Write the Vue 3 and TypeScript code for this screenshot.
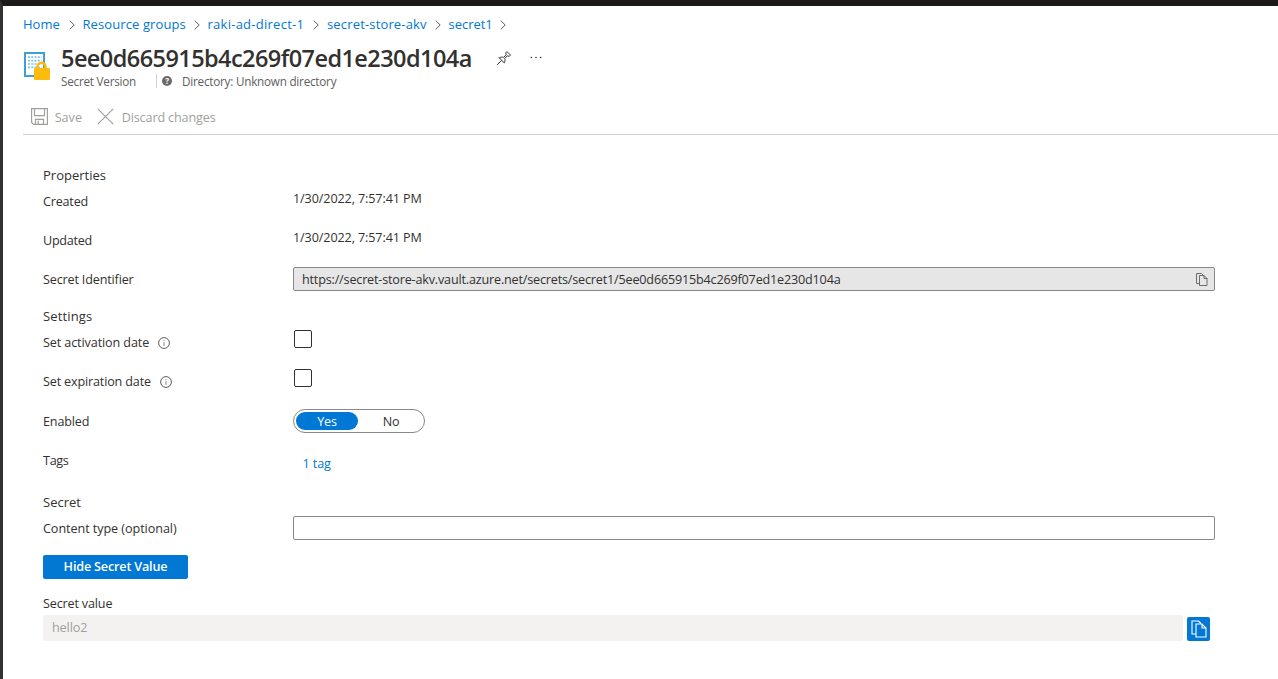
<script setup lang="ts">
import { ref } from 'vue'

const crumbs = ['Home', 'Resource groups', 'raki-ad-direct-1', 'secret-store-akv', 'secret1']
const version = '5ee0d665915b4c269f07ed1e230d104a'
const identifier = `https://secret-store-akv.vault.azure.net/secrets/secret1/${version}`
const activation = ref(false)
const expiration = ref(false)
const enabled = ref(true)
const contentType = ref('')
</script>

<template>
  <div class="page">
    <nav class="crumbs">
      <template v-for="(c, i) in crumbs" :key="c">
        <a :class="'c' + i">{{ c }}</a>
        <svg class="chev" width="6" height="10" viewBox="0 0 6 10"><path d="M.7.6 5.2 5 .7 9.4" /></svg>
      </template>
    </nav>

    <header class="head">
      <svg class="logo" width="28" height="30" viewBox="0 0 28 30">
        <rect x="2" y="1" width="19" height="23" fill="#fff" stroke="#3f9fd0" stroke-width="2" />
        <g stroke="#7cc3e6" stroke-width="1.7" stroke-dasharray="2 1.25">
          <path d="M5 5.2h13.5M5 8.6h13.5M5 12h13.5M5 15.4h13.5" />
        </g>
        <path d="M14.5 18v-3.2a4 4 0 0 1 8 0V18" fill="none" stroke="#fdbb0d" stroke-width="2.6" />
        <rect x="11" y="16" width="16" height="12" rx="1.2" fill="#fdbb0d" />
      </svg>
      <div class="heading">
        <div class="title-row">
          <h1>{{ version }}</h1>
          <svg class="pin" width="16" height="16" viewBox="0 0 16 16">
            <path d="M1.200 14.800 5.600 10.400M2.800 7.400l5.800 5.800M3.300 7.900c1.500-.9 3-1 4.400-.5l2.500-2.700-.4-1.900L11 1.600 14.500 5.100l-1.200 1.200-1.900-.4-2.700 2.500c.5 1.400.4 2.900-.5 4.400" />
          </svg>
          <svg class="dots" width="12" height="3" viewBox="0 0 12 3">
            <circle cx="1.300" cy="1.500" r=".8" /><circle cx="6" cy="1.500" r=".8" /><circle cx="10.700" cy="1.500" r=".8" />
          </svg>
        </div>
        <div class="sub-row">
          <span class="kind">Secret Version</span>
          <i class="bar"></i>
          <span class="help">?</span>
          <span class="dir">Directory: Unknown directory</span>
        </div>
      </div>
    </header>

    <div class="toolbar">
      <svg width="17" height="17" viewBox="0 0 17 17">
        <path d="M.6.600h15.800v15.800H2.600L.6 14.400zM3.500.600v7h10v-7M4.500 16.400v-5h8v5M7.200 12.500v4" />
      </svg>
      <span class="save">Save</span>
      <svg class="x" width="17" height="17" viewBox="0 0 17 17"><path d="m.8.800 15.400 15.400M16.200.800.8 16.200" /></svg>
      <span class="discard">Discard changes</span>
    </div>

    <main class="form">
      <div class="row"><span class="section">Properties</span></div>
      <div class="row"><label><span class="text t-created">Created</span></label><span class="date">1/30/2022, 7:57:41 PM</span></div>
      <div class="row gap"><label><span class="text t-updated">Updated</span></label><span class="date">1/30/2022, 7:57:41 PM</span></div>
      <div class="row gap">
        <label><span class="text t-ident">Secret Identifier</span></label>
        <div class="box readonly">
          <span class="url">{{ identifier }}</span>
          <svg width="12" height="13" viewBox="0 0 12 13"><path d="M3.500 10.500h-3v-10h5l2 2M3.500 2.500h4.500l3 3v7H3.500zM8 2.500v3h3" /></svg>
        </div>
      </div>

      <div class="row settings"><span class="section t-settings">Settings</span></div>
      <div class="row">
        <label><span class="text t-act">Set activation date</span><svg class="info" width="12" height="12" viewBox="0 0 12 12"><circle cx="6" cy="6" r="5.400" /><path d="M6 5v4M6 3v1.100" /></svg></label>
        <button class="check" :aria-pressed="activation" @click="activation = !activation"></button>
      </div>
      <div class="row gap">
        <label><span class="text">Set expiration date</span><svg class="info" width="12" height="12" viewBox="0 0 12 12"><circle cx="6" cy="6" r="5.400" /><path d="M6 5v4M6 3v1.100" /></svg></label>
        <button class="check" :aria-pressed="expiration" @click="expiration = !expiration"></button>
      </div>
      <div class="row gap enabled">
        <label><span class="text">Enabled</span></label>
        <div class="toggle">
          <button :class="{ on: enabled }" @click="enabled = true">Yes</button>
          <button :class="{ on: !enabled }" @click="enabled = false">No</button>
        </div>
      </div>
      <div class="row gap"><label><span class="text t-tags">Tags</span></label><a class="tag">1 tag</a></div>

      <div class="row secret"><span class="section">Secret</span></div>
      <div class="row">
        <label><span class="text t-content">Content type (optional)</span></label>
        <input v-model="contentType" class="box" type="text" />
      </div>
      <button class="primary">Hide Secret Value</button>
      <div class="row value-label"><span class="text">Secret value</span></div>
      <div class="value-row">
        <div class="value"><span>hello2</span></div>
        <button class="copy">
          <svg width="16" height="18" viewBox="0 0 16 18"><path d="M4.500 14H1V1h6.500L10 3.500M5 4h6l4 4v9H5zM11 4v4h4" /></svg>
        </button>
      </div>
    </main>
  </div>
</template>

<style>
body { background: #fff; }
</style>

<style scoped>
* { box-sizing: border-box; }
.page {
  height: 679px;
  overflow: hidden;
  border-top: 6px solid #1b1a19;
  border-left: 3px solid #323130;
  background: #fff;
  color: #323130;
  font: 12.6px/18px "Open Sans", "Noto Sans", sans-serif;
  white-space: nowrap;
}
a { color: #0078d4; }
button { font: inherit; padding: 0; margin: 0; }
svg { display: block; flex: none; fill: none; }
.crumbs { height: 36px; padding: 0 0 1px 20px; display: flex; align-items: center; font-size: 13px; }
.c0 { width: 37px; }
.c1 { width: 102.500px; letter-spacing: .1px; }
.c2 { width: 97px; letter-spacing: .26px; }
.c3 { width: 99px; letter-spacing: .16px; }
.c4 { width: 43px; letter-spacing: -.03px; }
.chev { margin: 3px 8px 0 8.500px; stroke: #605e5c; }
.head { display: flex; height: 52px; padding-left: 20px; }
.logo { margin-top: 10px; }
.heading { padding-left: 10px; }
.title-row { height: 31px; display: flex; align-items: center; }
h1 { margin: 0; padding-top: 1px; font-size: 23.500px; line-height: 31px; font-weight: 600; width: 411px; letter-spacing: -.56px; }
.pin { margin-left: 23.500px; stroke: #323130; stroke-width: 1; }
.dots { margin-left: 18.500px; fill: #323130; }
.sub-row { height: 16px; display: flex; align-items: center; font-size: 11.700px; letter-spacing: -.22px; color: #605e5c; }
.kind { width: 95px; }
.bar { width: 1px; height: 14px; background: #d2d0ce; }
.help { width: 10px; height: 10px; margin: 0 10px 0 5px; border-radius: 50%; background: #6b6967; color: #fff; font-size: 8px; line-height: 10px; font-weight: 700; text-align: center; }
.toolbar { height: 41px; margin-left: 20px; padding: 5px 0 0 7.500px; border-bottom: 1px solid #d2d0ce; display: flex; align-items: center; color: #a19f9d; }
.toolbar svg { stroke: #a19f9d; stroke-width: 1.150; }
.toolbar span { padding-top: 2px; }
.save { margin-left: 7.200px; width: 42.500px; }
.discard { margin-left: 7.500px; letter-spacing: -.13px; }
.form { padding: 27px 0 0 40px; }
.row { height: 26px; display: flex; align-items: center; }
.row label { width: 250px; display: flex; align-items: center; }
.text { padding-top: 2px; letter-spacing: -.16px; }
.t-act { letter-spacing: -.11px; }
.t-created { letter-spacing: -.2px; }
.t-updated { letter-spacing: -.28px; }
.t-content { letter-spacing: -.06px; }
.t-tags { letter-spacing: -.3px; }
.section { font-size: 13px; }
.t-settings { letter-spacing: .15px; }
.gap { margin-top: 13px; }
.date { margin-bottom: 4px; letter-spacing: -.11px; }
.url { padding-top: 2px; letter-spacing: -.175px; }
.box { width: 922px; height: 24px; border: 1px solid #8a8886; border-radius: 2px; padding: 0 6px 0 8px; background: #fff; outline: none; display: flex; align-items: center; justify-content: space-between; }
.readonly { background: #e6e6e6; }
.readonly svg { stroke: #605e5c; stroke-width: .9; }
.settings { margin-top: 11px; }
.info { margin: 2px 0 0 9px; stroke: #605e5c; }
.info path { stroke: #8a8886; }
.check { width: 18px; height: 18px; margin: 0 0 6px 1px; background: #fff; border: 1px solid #323130; border-radius: 2px; }
.enabled { margin-top: 14px; }
.toggle { width: 132px; height: 24px; border: 1px solid #8a8886; border-radius: 12px; padding: 2px; display: flex; }
.toggle button { flex: 0 0 62px; height: 18px; line-height: 18px; padding-top: 1px; border: 0; border-radius: 9px; background: none; color: #323130; letter-spacing: -.2px; }
.toggle button + button { margin-left: 2px; }
.toggle button.on { background: #0078d4; color: #fff; }
.tag { margin: 8px 0 0 9.500px; letter-spacing: -.1px; }
.secret { margin-top: 16px; }
.primary { display: block; margin-top: 14px; width: 145px; height: 24px; border: 0; border-radius: 2px; background: #0078d4; color: #fff; font-weight: 600; line-height: 24px; letter-spacing: -.17px; }
.value-label { margin-top: 11px; height: 25px; }
.value-row { display: flex; align-items: flex-start; }
.value { width: 1140px; height: 26px; padding: 0 9px; border-radius: 2px; background: #f3f2f1; color: #a19f9d; line-height: 25px; letter-spacing: -.1px; }
.copy { width: 23px; height: 24px; margin: 2px 0 0 4px; border: 0; border-radius: 2px; background: #0078d4; display: flex; align-items: center; justify-content: center; }
.copy svg { stroke: #fff; stroke-width: 1.100; }
</style>
